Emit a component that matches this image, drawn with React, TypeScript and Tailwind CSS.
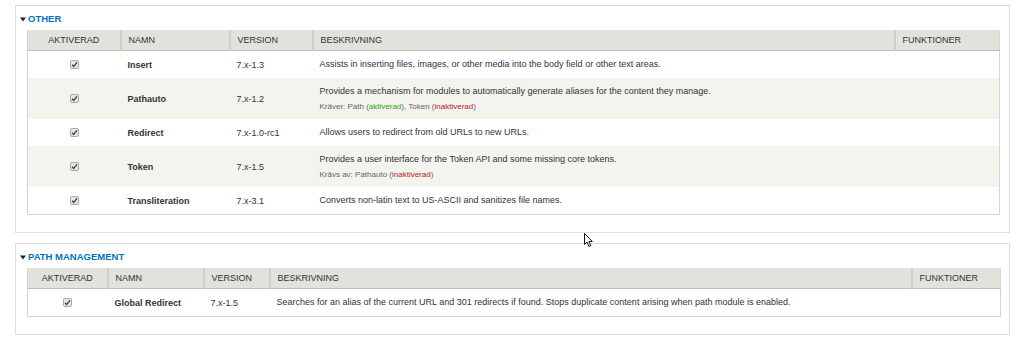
import type { ReactNode } from 'react';

type Mod = {
  name: string;
  version: string;
  desc: string;
  extra?: ReactNode;
};

const OTHER: Mod[] = [
  {
    name: 'Insert',
    version: '7.x-1.3',
    desc: 'Assists in inserting files, images, or other media into the body field or other text areas.',
  },
  {
    name: 'Pathauto',
    version: '7.x-1.2',
    desc: 'Provides a mechanism for modules to automatically generate aliases for the content they manage.',
    extra: (
      <>
        Kräver: Path (<span className="text-[#3a9a1c]">aktiverad</span>), Token (
        <span className="text-[#b3202b]">inaktiverad</span>)
      </>
    ),
  },
  {
    name: 'Redirect',
    version: '7.x-1.0-rc1',
    desc: 'Allows users to redirect from old URLs to new URLs.',
  },
  {
    name: 'Token',
    version: '7.x-1.5',
    desc: 'Provides a user interface for the Token API and some missing core tokens.',
    extra: (
      <>
        Krävs av: Pathauto (<span className="text-[#b3202b]">inaktiverad</span>)
      </>
    ),
  },
  {
    name: 'Transliteration',
    version: '7.x-3.1',
    desc: 'Converts non-latin text to US-ASCII and sanitizes file names.',
  },
];

const PATH: Mod[] = [
  {
    name: 'Global Redirect',
    version: '7.x-1.5',
    desc: 'Searches for an alias of the current URL and 301 redirects if found. Stops duplicate content arising when path module is enabled.',
  },
];

function Check() {
  return (
    <span className="inline-flex h-[9px] w-[9px] items-center justify-center rounded-[2px] border border-[#a9a9a9] bg-[#e6e6e6] align-middle">
      <svg width="7" height="7" viewBox="0 0 7 7">
        <path d="M1 3.8 L2.7 5.4 L6 1.4" fill="none" stroke="#444" strokeWidth="1.4" />
      </svg>
    </span>
  );
}

function Fieldset({
  title,
  cols,
  rows,
}: {
  title: string;
  cols: number[]; // bredd per kolumn
  rows: Mod[];
}) {
  const th = 'border-l-2 border-[#cfd0ca] px-[7px] py-[4px] font-normal leading-[12px]';
  return (
    <div className="border border-[#dcdcdc] bg-white pb-[17px] pl-[11px] pr-[10px]">
      <div className="-ml-[7px] flex h-[24px] items-center gap-[2px] pt-[2px]">
        <svg width="6" height="5" viewBox="0 0 6 5" className="mt-[1px]">
          <path d="M0 0.5 H6 L3 4.5 Z" fill="#222" />
        </svg>
        <span className="text-[9.5px] font-bold uppercase leading-[12px] text-[#0074bd]">{title}</span>
      </div>
      <table className="w-full table-fixed border-collapse border-x border-b border-[#d6d6d0] text-[9px] text-[#333]">
        <colgroup>
          {cols.map((w, i) => (
            <col key={i} style={{ width: w }} />
          ))}
        </colgroup>
        <thead>
          <tr className="border-b border-[#bebfb9] bg-[#e1e2dc] uppercase">
            <th className="px-[7px] py-[4px] text-center font-normal leading-[12px]">Aktiverad</th>
            <th className={`${th} text-left`}>Namn</th>
            <th className={`${th} text-left`}>Version</th>
            <th className={`${th} text-left`}>Beskrivning</th>
            <th className={`${th} text-left`}>Funktioner</th>
          </tr>
        </thead>
        <tbody>
          {rows.map((r, i) => (
            <tr key={r.name} className={i % 2 === 1 ? 'bg-[#f3f4ee]' : 'bg-white'}>
              <td className="text-center leading-[9px]">
                <Check />
              </td>
              <td className="px-[7px] font-bold leading-[12px]">{r.name}</td>
              <td className="px-[7px] leading-[12px]">{r.version}</td>
              <td className="px-[7px] py-[7px] leading-[13px]">
                <div>{r.desc}</div>
                {r.extra && <div className="mt-[3px] text-[8px] leading-[11px] text-[#666]">{r.extra}</div>}
              </td>
              <td />
            </tr>
          ))}
        </tbody>
      </table>
    </div>
  );
}

export default function App() {
  return (
    <div className="relative h-[340px] w-[1024px] bg-white font-['Liberation_Sans',Arial,sans-serif]">
      <div className="flex w-[1010px] flex-col gap-[10px] pl-[15px] pt-[5px]">
        <Fieldset title="Other" cols={[93, 109, 83, 582, 105]} rows={OTHER} />
        <Fieldset title="Path management" cols={[80, 96, 66, 642, 89]} rows={PATH} />
      </div>
      {/* muspekare */}
      <svg className="absolute left-[584px] top-[233px]" width="10" height="15" viewBox="0 0 10 15">
        <path
          d="M0.5 0.5 L0.5 11.5 L3 9 L5 13.5 L6.8 12.7 L4.9 8.5 L8.3 8.5 Z"
          fill="#fff"
          stroke="#111"
          strokeWidth="1"
          strokeLinejoin="round"
        />
      </svg>
    </div>
  );
}
